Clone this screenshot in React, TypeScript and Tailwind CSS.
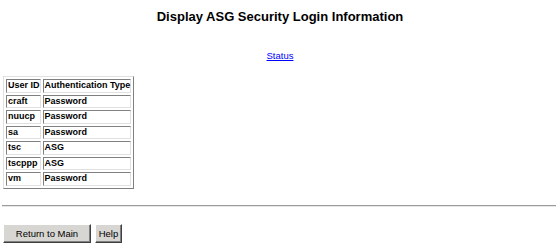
import React from "react";

const rows = [
  { id: "craft", type: "Password" },
  { id: "nuucp", type: "Password" },
  { id: "sa", type: "Password" },
  { id: "tsc", type: "ASG" },
  { id: "tscppp", type: "ASG" },
  { id: "vm", type: "Password" },
];

const cell =
  "border border-t-[#808080] border-l-[#808080] border-r-[#e0e0e0] border-b-[#e0e0e0] pl-[1px] pr-0 py-0 text-left leading-[11.5px] whitespace-nowrap";

function Button({ label, className }: { label: string; className?: string }) {
  return (
    <button
      className={
        "h-[19px] border border-t-white border-l-white border-r-[#404040] border-b-[#404040] bg-[#d8d6d2] text-[9.5px] leading-[15px] text-black shadow-[inset_-1px_-1px_#808080] " +
        (className || "")
      }
    >
      {label}
    </button>
  );
}

export default function App() {
  return (
    <div className="h-[250px] w-[560px] bg-white font-['Liberation_Sans',Arial,sans-serif] text-black">
      <div className="pt-[9px]">
        <h1 className="text-center text-[13px] font-bold leading-[15px]">
          Display ASG Security Login Information
        </h1>
      </div>

      <div className="mt-[26px] text-center text-[9.5px] leading-[12px]">
        <a href="#" className="text-[#0000ff] underline">
          Status
        </a>
      </div>

      <table className="mt-[14px] ml-[3px] border-separate border-spacing-[2px] border border-t-[#e0e0e0] border-l-[#e0e0e0] border-r-[#808080] border-b-[#808080] text-[9px] font-bold">
        <thead>
          <tr>
            <th className={cell + " font-bold"}>User ID</th>
            <th className={cell + " font-bold"}>Authentication Type</th>
          </tr>
        </thead>
        <tbody>
          {rows.map((r) => (
            <tr key={r.id}>
              <td className={cell}>{r.id}</td>
              <td className={cell}>{r.type}</td>
            </tr>
          ))}
        </tbody>
      </table>

      <hr className="ml-[2px] mr-[4px] mt-[16px] h-0 border-0 border-t border-b border-t-[#9a9a9a] border-b-[#e8e8e8]" />

      <div className="mt-[17px] flex gap-[4px] px-[3px]">
        <Button label="Return to Main" className="w-[88px]" />
        <Button label="Help" className="w-[27px]" />
      </div>
    </div>
  );
}
